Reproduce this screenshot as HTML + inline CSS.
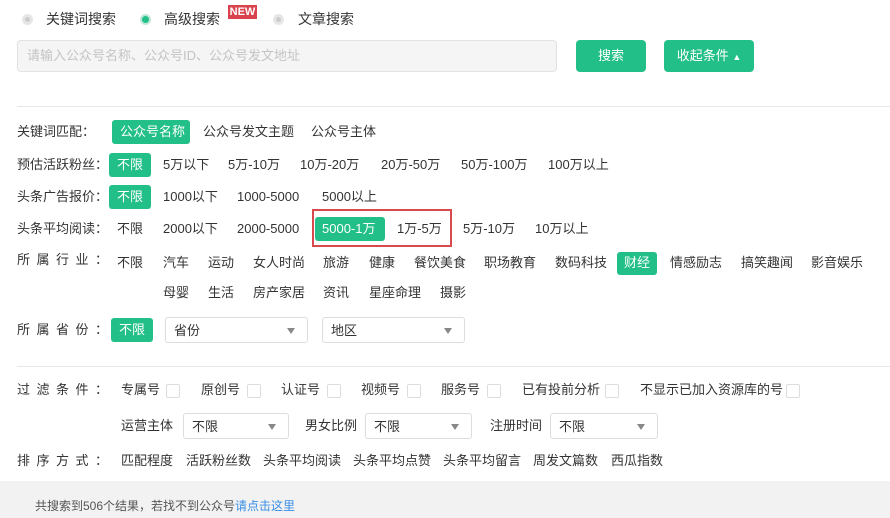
<!DOCTYPE html>
<html><head><meta charset="utf-8"><style>
body{margin:0;width:890px;height:518px;position:relative;overflow:hidden;background:#fff;font-family:"Liberation Sans","Noto Sans CJK SC",sans-serif;color:#333}
.t{position:absolute;font-size:13px;line-height:18px;white-space:nowrap;color:#333}
.g{position:absolute;background:#22bf88;border-radius:3px}
.w{color:#fff}
.ls{letter-spacing:6.5px}
.cb{position:absolute;width:12px;height:12px;border:1px solid #ddd;border-radius:2px;background:#fff}
.sel{position:absolute;height:24px;border:1px solid #ddd;border-radius:3px;background:#fff;font-size:13px;line-height:24px;color:#333;box-sizing:border-box;padding-left:8px}
.sel:after{content:"";position:absolute;right:12px;top:10px;border-left:4px solid transparent;border-right:4px solid transparent;border-top:6px solid #888}
.r{position:absolute;width:11px;height:11px;border-radius:50%;background:#e6e6e6}
.r:after{content:"";position:absolute;left:3px;top:3px;width:5px;height:5px;border-radius:50%;background:#ccc}
.btn{position:absolute;top:40px;height:32px;background:#22bf88;border-radius:4px;color:#fff;font-size:13px;line-height:32px;text-align:center}
</style></head><body>
<div class="r" style="left:22px;top:14px"></div>
<div class="t" style="left:46px;top:10px;font-size:14px">关键词搜索</div>
<div style="position:absolute;left:140px;top:14px;width:11px;height:11px;border-radius:50%;background:#bfe8d8"><div style="position:absolute;left:2px;top:2px;width:7px;height:7px;border-radius:50%;background:#22bf88"></div></div>
<div class="t" style="left:164px;top:10px;font-size:14px">高级搜索</div>
<div style="position:absolute;left:228px;top:5px;width:29px;height:14px;background:#d9434e;color:#fff;font-size:11px;line-height:14px;font-weight:bold;text-align:center">NEW</div>
<div class="r" style="left:273px;top:14px"></div>
<div class="t" style="left:298px;top:10px;font-size:14px">文章搜索</div>

<div style="position:absolute;left:17px;top:40px;width:540px;height:32px;box-sizing:border-box;background:#f5f5f5;border:1px solid #e2e2e2;border-radius:4px"></div>
<div class="t" style="left:27px;top:47px;color:#c4c4c4">请输入公众号名称、公众号ID、公众号发文地址</div>
<div class="btn" style="left:576px;width:70px">搜索</div>
<div class="btn" style="left:664px;width:90px">收起条件 <span style="font-size:9px">▲</span></div>
<div style="position:absolute;left:17px;top:106px;width:873px;height:1px;background:#e8e8e8"></div>

<div class="t" style="left:17px;top:123px">关键词匹配：</div>
<div class="g" style="left:112px;top:120px;width:78px;height:24px"></div>
<div class="t w" style="left:120px;top:123px">公众号名称</div>
<div class="t" style="left:203px;top:123px">公众号发文主题</div>
<div class="t" style="left:311px;top:123px">公众号主体</div>

<div class="t" style="left:17px;top:156px">预估活跃粉丝：</div>
<div class="g" style="left:109px;top:153px;width:42px;height:24px"></div>
<div class="t w" style="left:117px;top:156px">不限</div>
<div class="t" style="left:163px;top:156px">5万以下</div>
<div class="t" style="left:228px;top:156px">5万-10万</div>
<div class="t" style="left:300px;top:156px">10万-20万</div>
<div class="t" style="left:381px;top:156px">20万-50万</div>
<div class="t" style="left:461px;top:156px">50万-100万</div>
<div class="t" style="left:548px;top:156px">100万以上</div>

<div class="t" style="left:17px;top:188px">头条广告报价：</div>
<div class="g" style="left:109px;top:185px;width:42px;height:24px"></div>
<div class="t w" style="left:117px;top:188px">不限</div>
<div class="t" style="left:163px;top:188px">1000以下</div>
<div class="t" style="left:237px;top:188px">1000-5000</div>
<div class="t" style="left:322px;top:188px">5000以上</div>

<div class="t" style="left:17px;top:220px">头条平均阅读：</div>
<div class="t" style="left:117px;top:220px">不限</div>
<div class="t" style="left:163px;top:220px">2000以下</div>
<div class="t" style="left:237px;top:220px">2000-5000</div>
<div style="position:absolute;left:312px;top:209px;width:140px;height:38px;box-sizing:border-box;border:2px solid #d94a4f"></div>
<div class="g" style="left:315px;top:217px;width:70px;height:24px"></div>
<div class="t w" style="left:322px;top:220px">5000-1万</div>
<div class="t" style="left:397px;top:220px">1万-5万</div>
<div class="t" style="left:463px;top:220px">5万-10万</div>
<div class="t" style="left:535px;top:220px">10万以上</div>

<div class="t ls" style="left:17px;top:251px">所属行业：</div>
<div class="t" style="left:117px;top:254px">不限</div>
<div class="t" style="left:163px;top:254px">汽车</div>
<div class="t" style="left:208px;top:254px">运动</div>
<div class="t" style="left:253px;top:254px">女人时尚</div>
<div class="t" style="left:323px;top:254px">旅游</div>
<div class="t" style="left:369px;top:254px">健康</div>
<div class="t" style="left:414px;top:254px">餐饮美食</div>
<div class="t" style="left:484px;top:254px">职场教育</div>
<div class="t" style="left:555px;top:254px">数码科技</div>
<div class="g" style="left:617px;top:252px;width:40px;height:23px"></div>
<div class="t w" style="left:624px;top:254px">财经</div>
<div class="t" style="left:670px;top:254px">情感励志</div>
<div class="t" style="left:741px;top:254px">搞笑趣闻</div>
<div class="t" style="left:811px;top:254px">影音娱乐</div>
<div class="t" style="left:163px;top:284px">母婴</div>
<div class="t" style="left:208px;top:284px">生活</div>
<div class="t" style="left:253px;top:284px">房产家居</div>
<div class="t" style="left:323px;top:284px">资讯</div>
<div class="t" style="left:369px;top:284px">星座命理</div>
<div class="t" style="left:440px;top:284px">摄影</div>

<div class="t ls" style="left:17px;top:321px">所属省份：</div>
<div class="g" style="left:111px;top:318px;width:42px;height:24px"></div>
<div class="t w" style="left:119px;top:321px">不限</div>
<div class="sel" style="left:165px;top:317px;width:143px;height:26px;line-height:26px">省份</div>
<div class="sel" style="left:322px;top:317px;width:143px;height:26px;line-height:26px">地区</div>

<div style="position:absolute;left:17px;top:366px;width:873px;height:1px;background:#e8e8e8"></div>

<div class="t ls" style="left:17px;top:381px">过滤条件：</div>
<div class="t" style="left:121px;top:381px">专属号</div><div class="cb" style="left:166px;top:384px"></div>
<div class="t" style="left:201px;top:381px">原创号</div><div class="cb" style="left:247px;top:384px"></div>
<div class="t" style="left:281px;top:381px">认证号</div><div class="cb" style="left:327px;top:384px"></div>
<div class="t" style="left:361px;top:381px">视频号</div><div class="cb" style="left:407px;top:384px"></div>
<div class="t" style="left:441px;top:381px">服务号</div><div class="cb" style="left:487px;top:384px"></div>
<div class="t" style="left:522px;top:381px">已有投前分析</div><div class="cb" style="left:605px;top:384px"></div>
<div class="t" style="left:640px;top:381px">不显示已加入资源库的号</div><div class="cb" style="left:786px;top:384px"></div>

<div class="t" style="left:121px;top:417px">运营主体</div>
<div class="sel" style="left:183px;top:413px;width:106px;height:26px;line-height:26px">不限</div>
<div class="t" style="left:305px;top:417px">男女比例</div>
<div class="sel" style="left:365px;top:413px;width:107px;height:26px;line-height:26px">不限</div>
<div class="t" style="left:490px;top:417px">注册时间</div>
<div class="sel" style="left:550px;top:413px;width:108px;height:26px;line-height:26px">不限</div>

<div class="t ls" style="left:17px;top:452px">排序方式：</div>
<div class="t" style="left:121px;top:452px">匹配程度</div>
<div class="t" style="left:186px;top:452px">活跃粉丝数</div>
<div class="t" style="left:263px;top:452px">头条平均阅读</div>
<div class="t" style="left:353px;top:452px">头条平均点赞</div>
<div class="t" style="left:443px;top:452px">头条平均留言</div>
<div class="t" style="left:533px;top:452px">周发文篇数</div>
<div class="t" style="left:611px;top:452px">西瓜指数</div>

<div style="position:absolute;left:0;top:481px;width:890px;height:37px;background:#f2f2f2"></div>
<div class="t" style="left:35px;top:497px;font-size:12px;color:#555">共搜索到506个结果，若找不到公众号<span style="color:#3a8ee6">请点击这里</span></div>
</body></html>
